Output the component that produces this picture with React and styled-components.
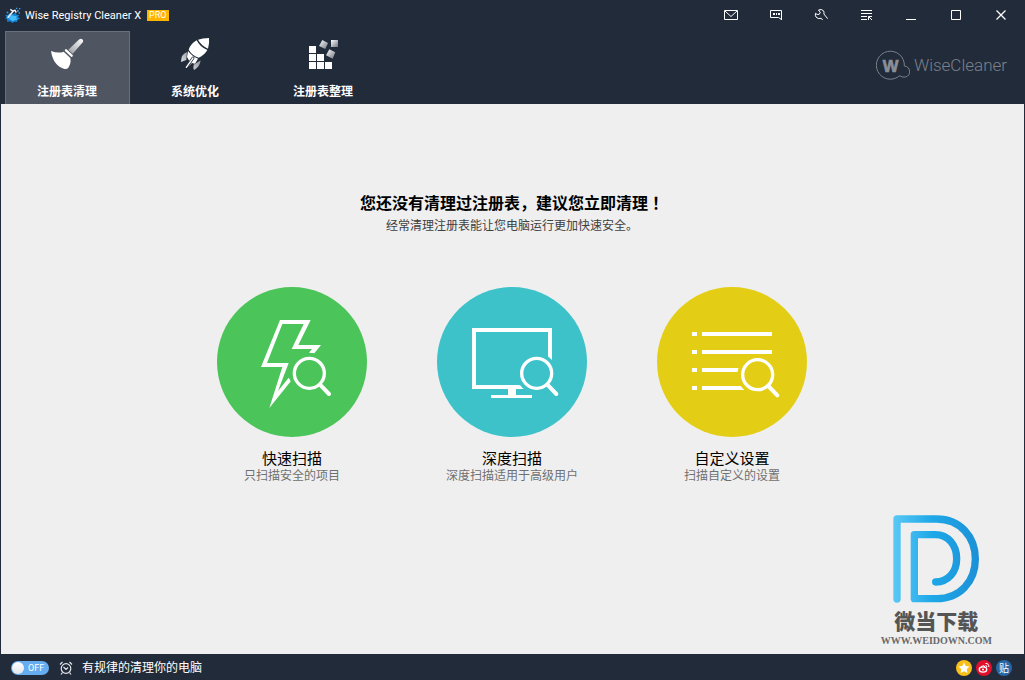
import React, { useState } from "react";
import styled, { createGlobalStyle } from "styled-components";

const Global = createGlobalStyle`
  * { box-sizing: border-box; }
  body { margin: 0; background: #222b3a; }
  button { font: inherit; color: inherit; background: none; border: 0; padding: 0; cursor: pointer; }
  svg { display: block; flex: none; }
`;

const Window = styled.div`
  min-height: 100vh;
  display: flex;
  flex-direction: column;
  background: #222b3a;
  color: #fff;
  font: 12px/16px "Noto Sans", "Noto Sans CJK SC", sans-serif;
`;

const TitleBar = styled.header`
  display: flex;
  align-items: center;
  height: 30px;
  padding: 0 1px 0 5px;
`;

const AppName = styled.h1`
  margin: 0 6px 0 4px;
  padding-top: 2px;
  font: 11px/16px Roboto, sans-serif;
  white-space: nowrap;
`;

const ProBadge = styled.span`
  padding: 0 2px;
  background: #ffb400;
  font: 9px/11px Roboto, sans-serif;
`;

const WindowTools = styled.div`
  display: flex;
  margin-left: auto;
`;

const ToolButton = styled.button`
  display: flex;
  align-items: center;
  justify-content: center;
  width: 45px;
  height: 30px;
`;

const Ribbon = styled.div`
  display: flex;
  justify-content: space-between;
  padding: 1px 18px 0 5px;
`;

const Tabs = styled.nav`
  display: flex;
  gap: 3px;
`;

const Tab = styled.button`
  display: flex;
  flex-direction: column;
  align-items: center;
  gap: 12px;
  width: 125px;
  height: 73px;
  padding: 5px 1px 0 0;
  border: 1px solid ${(p) => (p.$active ? "#6a707b" : "transparent")};
  border-bottom: 0;
  background: ${(p) => (p.$active ? "#4f5561" : "transparent")};
  font-weight: 700;
  line-height: 16px;
`;

const Brand = styled.div`
  display: flex;
  align-items: center;
  align-self: center;
  gap: 4px;
  padding-bottom: 6px;
  color: #7b808a;
  font: 300 17px/20px Roboto, "Liberation Sans", sans-serif;
`;

const Main = styled.main`
  position: relative;
  flex: 1;
  margin: 0 1px;
  padding: 86px 1px 60px 0;
  background: #efefef;
  color: #000;
  text-align: center;
`;

const Heading = styled.h2`
  margin: 0;
  font: 700 16px/24px "Noto Sans CJK SC", sans-serif;
`;

const Mark = styled.span`
  font-family: "Noto Sans CJK JP", sans-serif;
`;

const Lead = styled.p`
  margin: 0 0 52px;
  color: #404040;
  font: 12px/21px "Noto Sans CJK SC", sans-serif;
`;

const Cards = styled.div`
  display: flex;
  justify-content: center;
  gap: 70px;
`;

const Card = styled.button`
  display: flex;
  flex-direction: column;
  align-items: center;
  width: 150px;
`;

const CardTitle = styled.span`
  margin-top: 11px;
  font: 15px/20px "Noto Sans CJK SC", sans-serif;
`;

const CardNote = styled.span`
  color: #707070;
  font: 12px/14px "Noto Sans CJK SC", sans-serif;
  white-space: nowrap;
`;

const Watermark = styled.div`
  position: absolute;
  right: 32px;
  bottom: 6px;
  display: flex;
  flex-direction: column;
  align-items: center;
  color: #555;
`;

const WatermarkName = styled.strong`
  margin-top: 3px;
  font: 900 21px/28px "Noto Sans CJK SC", sans-serif;
`;

const WatermarkUrl = styled.span`
  font: 700 10px/14px "Liberation Serif", serif;
  color: #6a6a6a;
`;

const StatusBar = styled.footer`
  display: flex;
  align-items: center;
  height: 26px;
  padding: 1px 13px 0 11px;
`;

const Switch = styled.label`
  display: flex;
  align-items: center;
  gap: 4px;
  width: 38px;
  height: 14px;
  margin-right: 10px;
  padding: 0 1px;
  border-radius: 7px;
  background: #66acf0;
  font: 9px/14px Roboto, sans-serif;
`;

const Knob = styled.input`
  appearance: none;
  flex: none;
  width: 12px;
  height: 12px;
  margin: 0;
  border-radius: 50%;
  background: linear-gradient(#fff, #e2e6ea);
`;

const Schedule = styled.span`
  margin-left: 9px;
`;

const Links = styled.div`
  display: flex;
  gap: 4px;
  margin-left: auto;
`;

const RoundLink = styled.a`
  display: flex;
  align-items: center;
  justify-content: center;
  width: 16px;
  height: 16px;
  border-radius: 50%;
  background: ${(p) => p.$color};
  color: #fff;
  font: 10px/16px "Noto Sans CJK SC", sans-serif;
  text-decoration: none;
`;

const toolIcons = [
  ["邮件", <><path d="M.5 3.500h13v9H.5z" /><path d="M1 4l6 5.500 6-5.500" /></>],
  ["反馈", <><path d="M12.500 13V3.500h-11v7h8l3 2" /><path d="M4 7h2M7 7h1M9 7h2" strokeWidth="2" /></>],
  ["工具", <path d="M8.500 13L7.300 11.300Q3.800 12.400 2 10 .9 8.300 1.500 6.300L3.200 7.500 5.200 7.300 6.300 5.400 4.500 3Q7.500 1.700 9.400 3.700 10.400 5 9.900 7L13.700 11.700" />],
  ["菜单", <><path d="M2 3.500h11M2 6.500h11M2 9.500h6M2 12.500h6M9.500 13V9.500H13M9.500 9.500l3.500 3.500" /></>],
  ["最小化", <path d="M2 12.500h10" />],
  ["最大化", <path d="M2.500 3.500h9v9h-9z" />],
  ["关闭", <path d="M2.500 3.500l9 9M11.500 3.500l-9 9" strokeWidth="1.300" />],
];

function AppLogo() {
  return (
    <svg width="16" height="16" viewBox="0 0 48 48">
      <path d="M0 25l9-2 6-5 8 4 9-5 3 6 8 1-4 6 7 5-8 3-2 7-8-1-6 4-7-5-8 2-1-8-6-3 5-4z" fill="#1583d4" />
      <path d="M13 29l8-5 7 3 7 0-1 7 4 4-8 1-6 4-7-4-5-4z" fill="#45bdfb" />
      <path d="M25 12L8 32" stroke="#e4f1f8" strokeWidth="5" />
      <path d="M16 7l7 5 7-2 4 7" fill="none" stroke="#f5fbff" strokeWidth="4" />
      <path d="M36 9h5v5h-5zM42 3h4v4h-4zM41 16h4v4h-4zM33 2h4v4h-4zM5 14h5v5H5z" fill="#3aa8ee" />
    </svg>
  );
}

function BroomIcon() {
  return (
    <svg width="35" height="35" viewBox="150 111 105 105">
      <defs>
        <linearGradient id="handle" x1="1" y1="0" x2="0" y2="1">
          <stop offset="0" stopColor="#fff" /><stop offset="1" stopColor="#989ba1" />
        </linearGradient>
      </defs>
      <path d="M238 118q5-4 9 0t2 8l-31 35-13-12z" fill="url(#handle)" />
      <path d="M198 151l17 16" stroke="#fff" strokeWidth="7" strokeLinecap="round" />
      <path d="M153 153q22 8 38 2l20 19q3 16-6 29-4 5-11 4-34-9-41-54z" fill="#fff" />
    </svg>
  );
}

function RocketIcon() {
  return (
    <svg width="35" height="35" viewBox="54 21 105 105">
      <defs>
        <linearGradient id="fin" x1="1" y1="0" x2="0" y2="1">
          <stop offset="0" stopColor="#686e78" /><stop offset="1" stopColor="#fff" />
        </linearGradient>
      </defs>
      <path d="M81 66q-18 6-18 30l16-6zM101 104q-2 10 1 16 18-9 20-29z" fill="url(#fin)" />
      <path d="M147 24q-20 0-33 5 9 17 30 27 5-15 3-32z" fill="#fff" />
      <path d="M110 31q-17 9-24 28 11 18 30 24 18-8 26-23-22-8-32-29z" fill="#fff" />
      <path d="M84 63l-3 18 7 12-12 19 4 3 16-16 9 2 9-15Q96 79 84 63z" fill="#fff" />
      <path d="M99 84l-20 28" stroke="#222b3a" strokeWidth="9" strokeLinecap="round" />
      <path d="M99 84l-20 28" stroke="#fff" strokeWidth="4" strokeLinecap="round" />
    </svg>
  );
}

function BlocksIcon() {
  return (
    <svg width="35" height="35" viewBox="438 21 105 105">
      <defs>
        <linearGradient id="cube" x1="0" y1="0" x2="1" y2="1">
          <stop offset="0" stopColor="#fff" /><stop offset="1" stopColor="#707680" />
        </linearGradient>
      </defs>
      <path d="M447 48h21v21h-21zM447 72h21v21h-21zM471 72h21v21h-21zM447 96h21v21h-21zM471 96h21v21h-21zM495 96h21v21h-21z" fill="#fff" />
      <path d="M487 30l17 9-8 18-19-9z" fill="url(#cube)" />
      <path d="M513 30h21v21h-21z" fill="url(#cube)" />
      <path d="M508 58l18 9-8 19-20-10z" fill="url(#cube)" />
    </svg>
  );
}

function BrandMark() {
  return (
    <svg width="34" height="30" viewBox="528 148 102 90">
      <path d="M613 196A42 42 0 1 0 599 225Q607 231 617 229 630 225 629 211 626 197 613 196" fill="none" stroke="#7b808a" strokeWidth="3" />
      <text x="572" y="213" textAnchor="middle" fill="#8b8f98" stroke="#8b8f98" strokeWidth="2" fontFamily="Liberation Sans, sans-serif" fontWeight="700" fontSize="50">W</text>
    </svg>
  );
}

function Magnifier({ x, y, color }) {
  return (
    <g fill="none" strokeLinecap="round">
      <circle cx={x} cy={y} r="61" fill={color} />
      <circle cx={x} cy={y} r="45" stroke="#fff" strokeWidth="10" />
      <path d={`M${x + 32} ${y + 34}l27 28`} stroke="#fff" strokeWidth="12" />
    </g>
  );
}

function Disc({ color, x, y, children }) {
  return (
    <svg width="150" height="150" viewBox="21 21 450 450">
      <circle cx="246" cy="246" r="225" fill={color} />
      {children}
      <Magnifier x={x} y={y} color={color} />
    </svg>
  );
}

const tabs = [
  ["注册表清理", <BroomIcon />],
  ["系统优化", <RocketIcon />],
  ["注册表整理", <BlocksIcon />],
];

const scans = [
  {
    title: "快速扫描", note: "只扫描安全的项目", color: "#4bc45a", x: 298, y: 280,
    art: <path fill="#fff" d="M210 120h92l-37 75h68l-20 25-16-2 9-11h-61l36-75h-64l-46 117h65l-32 84 32-40 7 10-65 81 39-123h-64z" />,
  },
  {
    title: "深度扫描", note: "深度扫描适用于高级用户", color: "#3cc2c8", x: 320, y: 280,
    art: <><path d="M132 150h228v171H132z" fill="none" stroke="#fff" strokeWidth="12" /><path d="M234 326h24v19h48v9H183v-9h51z" fill="#fff" /></>,
  },
  {
    title: "自定义设置", note: "扫描自定义的设置", color: "#e3ce15", x: 323, y: 284,
    art: <path d="M126 162h15m15 0h210M126 216h15m15 0h210M126 270h15m15 0h210M126 324h15m15 0h160" stroke="#fff" strokeWidth="12" />,
  },
];

function WatermarkLogo() {
  return (
    <svg width="86" height="88" viewBox="69 29 258 264">
      <defs>
        <linearGradient id="dee" gradientUnits="userSpaceOnUse" x1="70" y1="0" x2="327" y2="0">
          <stop offset="0" stopColor="#5ac8f5" /><stop offset=".45" stopColor="#1ea8e8" /><stop offset="1" stopColor="#1c90d6" />
        </linearGradient>
      </defs>
      <path d="M81 281V41H200C270 41 316 94 316 161S270 280 200 280H133V88H196C235 88 260 120 260 160S235 229 197 230" fill="none" stroke="url(#dee)" strokeWidth="22" strokeLinecap="round" strokeLinejoin="round" />
    </svg>
  );
}

export default function App() {
  const [active, setActive] = useState(0);
  return (
    <Window>
      <Global />
      <TitleBar>
        <AppLogo />
        <AppName>Wise Registry Cleaner X</AppName>
        <ProBadge>PRO</ProBadge>
        <WindowTools>
          {toolIcons.map(([label, art]) => (
            <ToolButton key={label} aria-label={label}>
              <svg width="15" height="16" viewBox="0 0 15 16" fill="none" stroke="#fff">{art}</svg>
            </ToolButton>
          ))}
        </WindowTools>
      </TitleBar>
      <Ribbon>
        <Tabs>
          {tabs.map(([label, icon], i) => (
            <Tab key={label} $active={i === active} onClick={() => setActive(i)}>
              {icon}
              {label}
            </Tab>
          ))}
        </Tabs>
        <Brand><BrandMark />WiseCleaner</Brand>
      </Ribbon>
      <Main>
        <Heading>您还没有清理过注册表，建议您立即清理<Mark lang="ja">！</Mark></Heading>
        <Lead>经常清理注册表能让您电脑运行更加快速安全。</Lead>
        <Cards>
          {scans.map((s) => (
            <Card key={s.title}>
              <Disc color={s.color} x={s.x} y={s.y}>{s.art}</Disc>
              <CardTitle>{s.title}</CardTitle>
              <CardNote>{s.note}</CardNote>
            </Card>
          ))}
        </Cards>
        <Watermark>
          <WatermarkLogo />
          <WatermarkName>微当下载</WatermarkName>
          <WatermarkUrl>WWW.WEIDOWN.COM</WatermarkUrl>
        </Watermark>
      </Main>
      <StatusBar>
        <Switch>
          <Knob type="checkbox" aria-label="有规律的清理你的电脑" />
          OFF
        </Switch>
        <svg width="14" height="14" viewBox="0 0 14 14" fill="none" stroke="#e4e6e9" strokeWidth="1.200">
          <circle cx="7" cy="7.500" r="4.800" />
          <path d="M1 3.500L3.500 1M13 3.500L10.500 1M3.500 11.500L2 13.500M10.500 11.500L12 13.500M4.500 6L7 8.500 9 6.500" />
        </svg>
        <Schedule>有规律的清理你的电脑</Schedule>
        <Links>
          <RoundLink href="#qzone" aria-label="QQ空间" $color="#f9c01c">
            <svg width="12" height="12" viewBox="0 0 12 12"><path d="M6 .5l1.700 3.500 3.800.5-2.800 2.700.7 3.900L6 9.300l-3.400 1.800.7-3.900L.5 4.500 4.300 4z" fill="#fff" /></svg>
          </RoundLink>
          <RoundLink href="#weibo" aria-label="微博" $color="#e0102c">
            <svg width="12" height="12" viewBox="0 0 12 12" fill="none" stroke="#fff">
              <ellipse cx="5" cy="7.500" rx="3.700" ry="2.600" strokeWidth="1.400" />
              <circle cx="5" cy="7.600" r="1" fill="#fff" stroke="none" />
              <path d="M3 4.600l3-1 .8 1.500M7.500 1.500q3.500-.3 3.300 3.500M7.500 3.500q1.500 0 1.400 1.500" />
            </svg>
          </RoundLink>
          <RoundLink href="#tieba" $color="#2468a8">贴</RoundLink>
        </Links>
      </StatusBar>
    </Window>
  );
}
